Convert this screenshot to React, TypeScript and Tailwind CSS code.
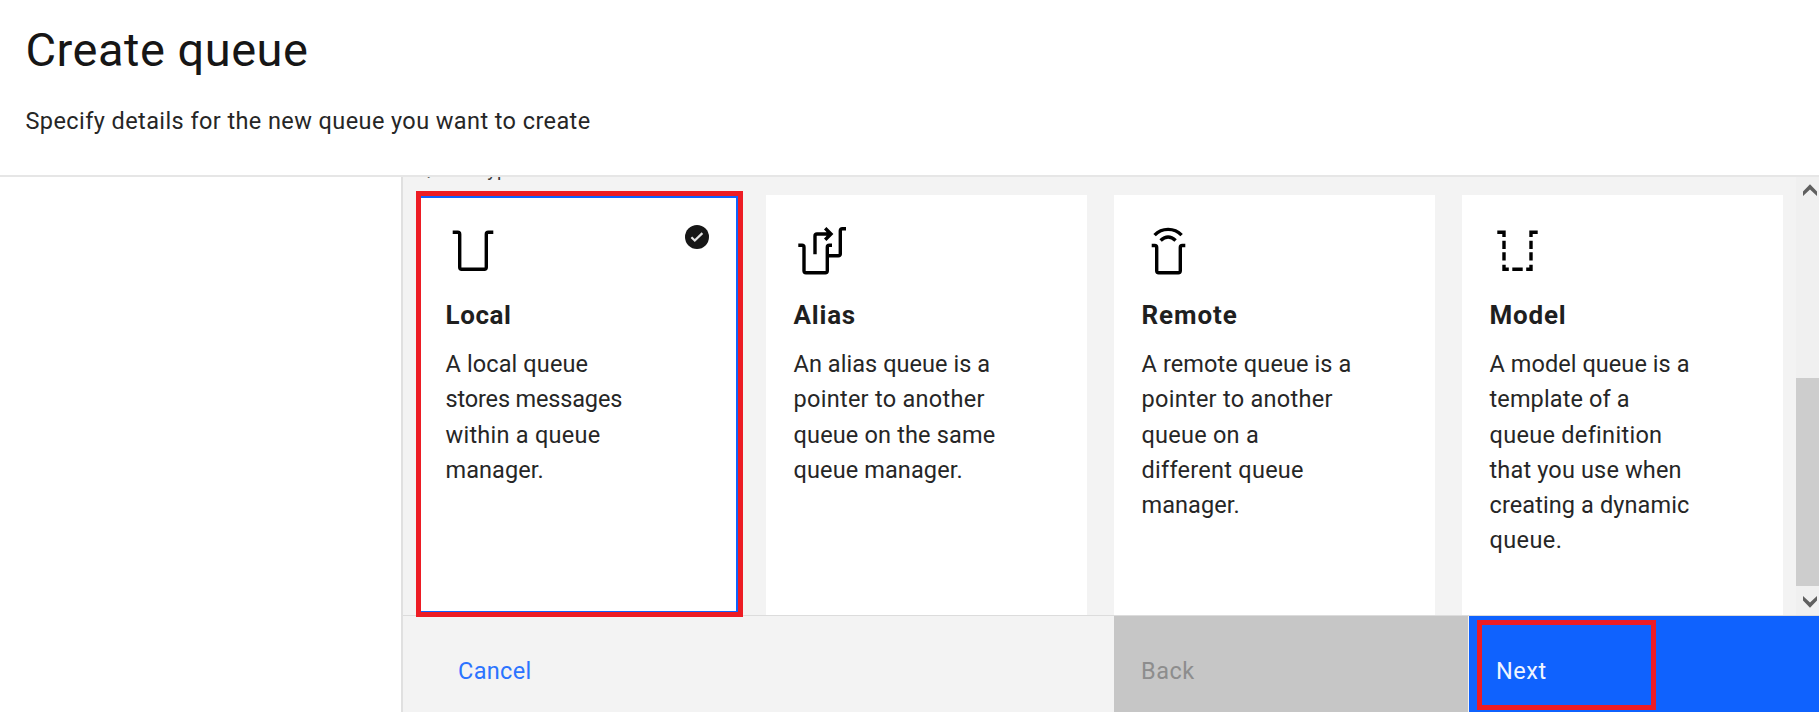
import type { ReactNode } from 'react';
import clsx from 'clsx';

type Line = { text: string; tracking: string };

type QueueType = {
  name: string;
  nameTracking: string;
  lines: Line[];
  icon: ReactNode;
  selected?: boolean;
};

function QueueIcon({ children }: { children: ReactNode }) {
  return (
    <svg
      viewBox="0 0 52 52"
      className="block h-[52px] w-[52px]"
      fill="none"
      stroke="#000"
      strokeWidth="3.4"
    >
      {children}
    </svg>
  );
}

const queueTypes: QueueType[] = [
  {
    name: 'Local',
    nameTracking: 'tracking-[0.6px]',
    selected: true,
    icon: (
      <QueueIcon>
        <path d="M6.7 7.3h5q2 0 2 2v33q0 2 2 2h22.6q2 0 2-2v-33q0-2 2-2h5" />
      </QueueIcon>
    ),
    lines: [
      { text: 'A local queue', tracking: 'tracking-[0.12px]' },
      { text: 'stores messages', tracking: 'tracking-[-0.16px]' },
      { text: 'within a queue', tracking: 'tracking-[0.26px]' },
      { text: 'manager.', tracking: 'tracking-[0.08px]' },
    ],
  },
  {
    name: 'Alias',
    nameTracking: 'tracking-[0.8px]',
    icon: (
      <QueueIcon>
        <path d="M4.3 20.3H8q2 0 2 2v23.4q0 2 2 2h19.3q2 0 2-2V22.3q0-2 2-2H38" />
        <path d="M33.3 30.7h11q2 0 2-2V5.7q0-2 2-2h3.7" />
        <path d="M21 29.3V11q0-2 2-2h13" />
        <path d="M31.2 3.2 37 9l-5.8 5.8" />
        <path d="M32.5 6 36 9l-3.5 3z" fill="#000" stroke="none" />
      </QueueIcon>
    ),
    lines: [
      { text: 'An alias queue is a', tracking: 'tracking-[0.06px]' },
      { text: 'pointer to another', tracking: 'tracking-[0.28px]' },
      { text: 'queue on the same', tracking: 'tracking-[0.16px]' },
      { text: 'queue manager.', tracking: 'tracking-[0.12px]' },
    ],
  },
  {
    name: 'Remote',
    nameTracking: 'tracking-[0.9px]',
    icon: (
      <QueueIcon>
        <path d="M9.7 20.5h3q2 0 2 2v23.2q0 2 2 2h19.6q2 0 2-2V22.5q0-2 2-2h3" />
        <path d="M12.6 10.2A18.5 18.5 0 0 1 39.6 10.2" />
        <path d="M18.6 15.6Q26.1 8.4 33.6 15.6" />
      </QueueIcon>
    ),
    lines: [
      { text: 'A remote queue is a', tracking: 'tracking-[0.11px]' },
      { text: 'pointer to another', tracking: 'tracking-[0.28px]' },
      { text: 'queue on a', tracking: 'tracking-[0.24px]' },
      { text: 'different queue', tracking: 'tracking-[0.26px]' },
      { text: 'manager.', tracking: 'tracking-[0.08px]' },
    ],
  },
  {
    name: 'Model',
    nameTracking: 'tracking-[0.8px]',
    icon: (
      <QueueIcon>
        <path d="M7.3 7.3H14v4.6M14 15.7V24M14 27.3v8.2M14 39.7v4.6h4.8M22.3 44.3h10.4M36.2 44.3H41v-4.6M41 35.5v-8.2M41 24v-8.3M41 11.9V7.3h6.7" />
      </QueueIcon>
    ),
    lines: [
      { text: 'A model queue is a', tracking: 'tracking-[0.06px]' },
      { text: 'template of a', tracking: 'tracking-[0.12px]' },
      { text: 'queue definition', tracking: 'tracking-[0.3px]' },
      { text: 'that you use when', tracking: 'tracking-[0.16px]' },
      { text: 'creating a dynamic', tracking: 'tracking-[0.1px]' },
      { text: 'queue.', tracking: 'tracking-[0.4px]' },
    ],
  },
];

function Highlight({ className }: { className: string }) {
  return <div className={clsx('pointer-events-none absolute border-[5px] border-[#ed1c24]', className)} />;
}

function QueueCard({ type }: { type: QueueType }) {
  return (
    <button
      type="button"
      className={clsx(
        'relative flex flex-col items-start bg-white pl-[27.5px] pt-[30px] text-left',
        type.selected
          ? 'h-[419px] shadow-[inset_0_0_0_3px_#0f62fe]'
          : 'h-[420px]',
      )}
    >
      {type.icon}
      {type.selected && (
        <svg viewBox="0 0 24 24" className="absolute right-[30px] top-[30px] h-6 w-6">
          <circle cx="12" cy="12" r="12" fill="#161616" />
          <path d="M6.4 12.2l3.4 3.3 7.6-7.4" fill="none" stroke="#e4e4e4" strokeWidth="2.2" />
        </svg>
      )}
      <h2
        className={clsx(
          'mt-[22px] text-[26px] font-bold leading-[32px] text-[#1f1f1f]',
          type.nameTracking,
        )}
      >
        {type.name}
      </h2>
      <p className="mt-[16px] text-[23.5px] leading-[35.3px] text-[#262626]">
        {type.lines.map((line) => (
          <span key={line.text} className={clsx('block whitespace-nowrap', line.tracking)}>
            {line.text}
          </span>
        ))}
      </p>
    </button>
  );
}

function Scrollbar() {
  return (
    <div className="flex w-[23px] shrink-0 flex-col items-end bg-[#f0f0f0]">
      <svg viewBox="0 0 14 12" className="mr-[2px] mt-[7px] h-3 w-3.5">
        <path d="M0 7.6 7 .2l7 7.4V12L7 5.4 0 12z" fill="#606060" />
      </svg>
      <div className="mt-[182px] h-[208px] w-full bg-[#cdcdcd]" />
      <svg viewBox="0 0 14 12" className="mr-[2px] mt-[10px] h-3 w-3.5">
        <path d="M0 4.4 7 11.8l7-7.4V0L7 6.6 0 0z" fill="#606060" />
      </svg>
    </div>
  );
}

export default function App() {
  return (
    <div className="flex h-[712px] w-[1819px] flex-col overflow-hidden bg-white font-['Roboto',sans-serif]">
      <header className="h-[177px] shrink-0 border-b-2 border-[#e6e6e6] pl-[25.5px] pt-[22px] text-[#161616]">
        <h1 className="text-[47px] leading-[56px] tracking-[0.5px]">Create queue</h1>
        <p className="mt-[27px] text-[23.5px] leading-[32px] tracking-[0.41px] text-[#262626]">
          Specify details for the new queue you want to create
        </p>
      </header>

      <div className="flex min-h-0 flex-1">
        <aside className="w-[401px] shrink-0" />
        <main className="relative flex min-w-0 flex-1 flex-col border-l-2 border-[#e0e0e0] bg-[#f3f3f3]">
          <section className="flex h-[438px] shrink-0 overflow-hidden">
            <div className="flex flex-1 flex-col pl-[15px]">
              <div className="-mt-[17px] h-[36px] text-[19px] leading-[20px] tracking-[0.6px] text-[#393939]">
                Queue type
              </div>
              <div className="grid w-[1365px] grid-cols-4 items-start gap-x-[27px]">
                {queueTypes.map((type) => (
                  <QueueCard key={type.name} type={type} />
                ))}
              </div>
            </div>
            <Scrollbar />
          </section>

          <footer className="flex flex-1 border-t border-[#dcdcdc] text-[23.5px] leading-[32px]">
            <div className="flex w-[711px] items-start pl-[55px] pt-[39px]">
              <button type="button" className="tracking-[0.35px] text-[#2b73ff]">
                Cancel
              </button>
            </div>
            <button
              type="button"
              disabled
              className="flex w-[354px] items-start bg-[#c6c6c6] pl-[27px] pt-[39px] tracking-[0.5px] text-[#8d8d8d]"
            >
              Back
            </button>
            <button
              type="button"
              className="ml-px flex flex-1 items-start bg-[#0f62fe] pl-[27px] pt-[39px] tracking-[0.5px] text-[#f0f5ff]"
            >
              Next
            </button>
          </footer>

          <Highlight className="left-[13px] top-[14px] h-[426px] w-[327px]" />
          <Highlight className="left-[1074px] top-[443px] h-[90px] w-[179px]" />
        </main>
      </div>
    </div>
  );
}
